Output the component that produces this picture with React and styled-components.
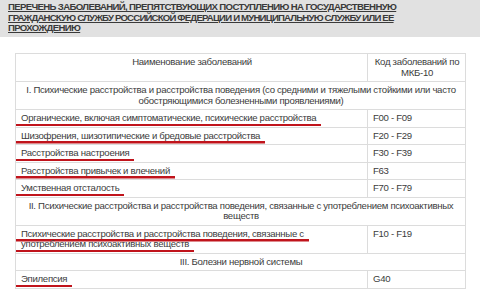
import React from 'react'
import styled, {createGlobalStyle} from 'styled-components'

const GlobalStyle = createGlobalStyle`
    html, body {
        margin: 0;
        padding: 0;
        background: #fff;
    }
    body {
        font-family: "Liberation Sans", Arial, sans-serif;
    }
`

const Page = styled.div`
    width: 480px;
    height: 292px;
    overflow: hidden;
    background: #fff;
`

const Banner = styled.div`
    background: #e1e1e1;
    padding: 2px 8px 4px 8px;
    height: 31px;
`

const Title = styled.a`
    display: block;
    color: #3a3a3a;
    text-decoration: underline;
`

const TitleLine = styled.span`
    display: block;
    font-size: 9.6px;
    line-height: 10.5px;
    font-weight: bold;
    text-transform: uppercase;
    white-space: nowrap;
    letter-spacing: ${p => p.ls || '-0.65px'};
`

const Wrap = styled.div`
    padding: 16px 0 0 15px;
`

const Table = styled.table`
    width: 451px;
    border-collapse: collapse;
    font-size: 9.6px;
    line-height: 10.5px;
    letter-spacing: -0.3px;
    color: #3c3c3c;
`

const Cell = styled.td`
    border: 1px solid #dcdcdc;
    padding: 3px 4px 3px 5px;
    vertical-align: top;
    text-align: ${p => (p.center ? 'center' : 'left')};
    width: ${p => p.w || 'auto'};
`

const Mark = styled.span`
    padding: 0 5px 3px 5px;
    margin-left: -5px;
    background: linear-gradient(#c0141c, #c0141c) no-repeat left bottom / 100% 2.5px;
    -webkit-box-decoration-break: clone;
    box-decoration-break: clone;
`

const NameBox = styled.div`
    max-width: ${p => p.w || 'none'};
`

const rows = [
    {type: 'section', text: 'I. Психические расстройства и расстройства поведения (со средними и тяжелыми стойкими или часто обостряющимися болезненными проявлениями)'},
    {name: 'Органические, включая симптоматические, психические расстройства', code: 'F00 - F09'},
    {name: 'Шизофрения, шизотипические и бредовые расстройства', code: 'F20 - F29'},
    {name: 'Расстройства настроения', code: 'F30 - F39'},
    {name: 'Расстройства привычек и влечений', code: 'F63'},
    {name: 'Умственная отсталость', code: 'F70 - F79'},
    {type: 'section', text: 'II. Психические расстройства и расстройства поведения, связанные с употреблением психоактивных веществ'},
    {name: 'Психические расстройства и расстройства поведения, связанные с употреблением психоактивных веществ', code: 'F10 - F19', wrap: '290px'},
    {type: 'section', text: 'III. Болезни нервной системы'},
    {name: 'Эпилепсия', code: 'G40'},
]

const App = () => {
    return (
        <Page>
            <GlobalStyle/>
            <Banner>
                <Title>
                    <TitleLine>Перечень заболеваний, препятствующих поступлению на государственную</TitleLine>
                    <TitleLine ls="-0.8px">гражданскую службу Российской Федерации и муниципальную службу или ее</TitleLine>
                    <TitleLine>прохождению</TitleLine>
                </Title>
            </Banner>
            <Wrap>
                <Table>
                    <tbody>
                    <tr>
                        <Cell center>Наименование заболеваний</Cell>
                        <Cell center w="88px">Код заболеваний по МКБ-10</Cell>
                    </tr>
                    {rows.map((r, i) => r.type === 'section' ? (
                        <tr key={i}>
                            <Cell center colSpan={2}>{r.text}</Cell>
                        </tr>
                    ) : (
                        <tr key={i}>
                            <Cell>
                                <NameBox w={r.wrap}><Mark>{r.name}</Mark></NameBox>
                            </Cell>
                            <Cell>{r.code}</Cell>
                        </tr>
                    ))}
                    </tbody>
                </Table>
            </Wrap>
        </Page>
    )
}

export default App
